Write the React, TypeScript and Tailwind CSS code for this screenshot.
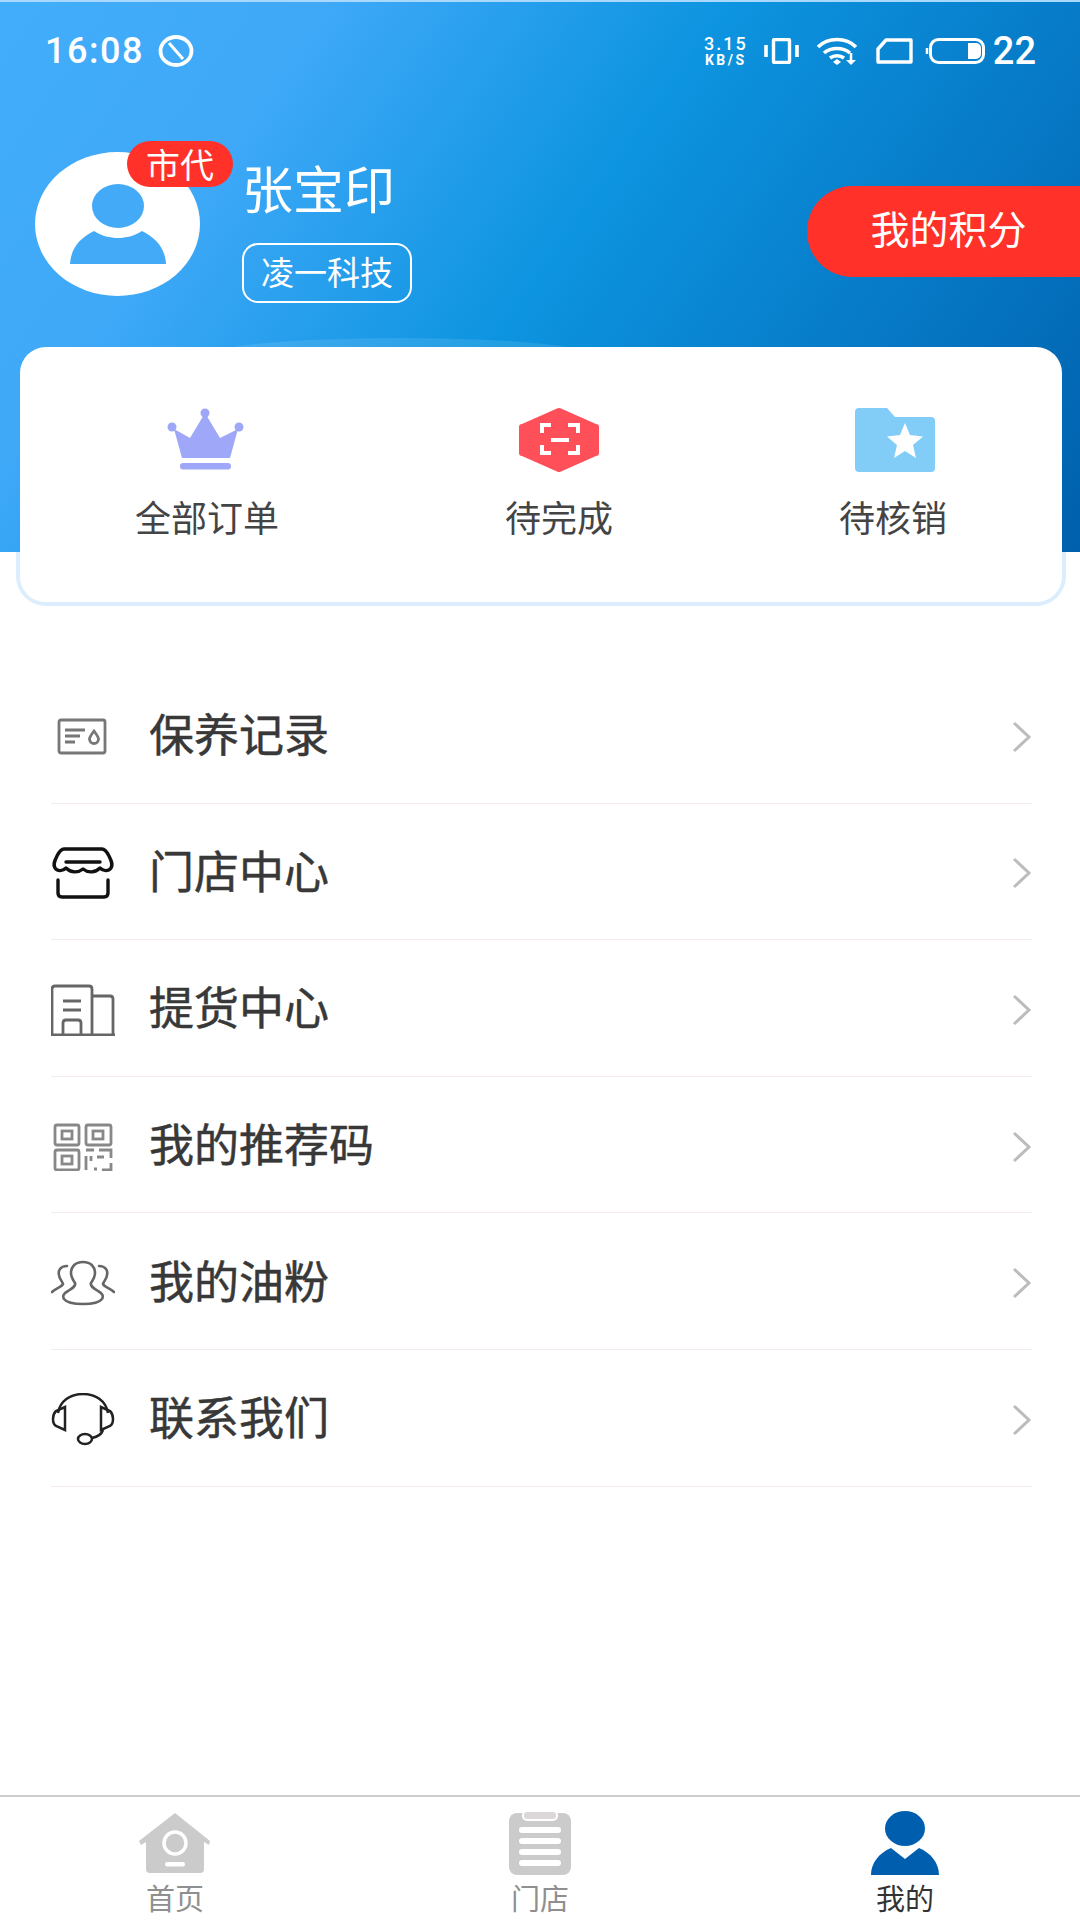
import React from "react";

const Chevron = () => (
  <svg width="20" height="32" viewBox="0 0 20 32" fill="none" stroke="#bcbcbc" strokeWidth="3"><path d="M2 2l15 14L2 30" /></svg>
);

const NoDisturb = () => (
  <svg width="36" height="32" viewBox="0 0 36 32" fill="none" stroke="white" strokeWidth="3.800"><ellipse cx="18" cy="16" rx="15.500" ry="14" /><path d="M11 8l14 16" strokeWidth="3" /></svg>
);

const Vibrate = () => (
  <svg width="35" height="26" viewBox="0 0 35 26" fill="none" stroke="white"><rect x="9.500" y="1.500" width="16" height="23" strokeWidth="3.400" rx="1" /><path d="M2 7v12M33 7v12" strokeWidth="3.600" /></svg>
);

const Wifi = () => (
  <svg width="42" height="29" viewBox="0 0 42 29" fill="none" stroke="white" strokeWidth="3.600">
    <path d="M2 10C12 0 30 0 40 10" /><path d="M8 16c7-6 19-6 26 0" /><path d="M14 21c4-3 10-3 14 0" />
    <path d="M17 25l4-3 4 3-4 3z" fill="white" stroke="none" /><path d="M35 16v9" strokeWidth="2.500" /><path d="M30 23h10l-5 5z" fill="white" stroke="none" />
  </svg>
);

const Sim = () => (
  <svg width="37" height="26" viewBox="0 0 37 26" fill="none" stroke="white" strokeWidth="3.400"><path d="M10 2h25v22H2V11z" strokeLinejoin="round" /></svg>
);

const Battery = () => (
  <svg width="60" height="26" viewBox="0 0 60 26" fill="none">
    <path d="M2 10v6" stroke="white" strokeWidth="2.500" />
    <rect x="5.500" y="1.500" width="53" height="23" rx="8" stroke="white" strokeWidth="3" />
    <path d="M43 5h8a5 5 0 0 1 5 5v6a5 5 0 0 1-5 5h-8z" fill="white" />
  </svg>
);

const Person = () => (
  <svg width="96" height="80" viewBox="0 0 96 80" fill="#43aaf7">
    <ellipse cx="48" cy="22" rx="26" ry="22" />
    <path d="M0 80C1 64 10 54 24 47c8 5 16 7 24 7s16-2 24-7c14 7 23 17 24 33z" />
  </svg>
);

const Crown = () => (
  <svg width="80" height="64" viewBox="0 0 80 64" fill="#9fa8f8">
    <circle cx="38" cy="5" r="4.500" /><circle cx="5" cy="19" r="4.500" /><circle cx="72" cy="19" r="4.500" />
    <path d="M38 5L53 30l18-9-8 29H15L7 21l16 9z" />
    <rect x="13" y="55" width="51" height="6.500" rx="3" />
  </svg>
);

const Hex = () => (
  <svg width="80" height="64" viewBox="0 0 80 64">
    <path d="M40 0a4 4 0 0 1 2 .5L77 16a3 3 0 0 1 3 3v26a3 3 0 0 1-3 3L42 63.500a4 4 0 0 1-4 0L3 48a3 3 0 0 1-3-3V19a3 3 0 0 1 3-3L38 .5A4 4 0 0 1 40 0z" fill="#ff4f58" />
    <path d="M23 25V17h9M49 17h10v8M23 37v8h9M59 37v8H49" fill="none" stroke="white" strokeWidth="4" /><path d="M32 32h18" stroke="white" strokeWidth="4" />
  </svg>
);

const Folder = () => (
  <svg className="ml-[4px]" width="80" height="64" viewBox="0 0 80 64">
    <path d="M0 4a4 4 0 0 1 4-4h28l8 9h36a4 4 0 0 1 4 4v47a4 4 0 0 1-4 4H4a4 4 0 0 1-4-4z" fill="#82ccf8" />
    <path d="M50 15l5 12 13 1.500-10 8.500 3 13-11-7-11 7 3-13-10-8.500 13-1.500z" fill="white" />
  </svg>
);

const Care = () => (
  <svg width="64" height="40" viewBox="0 0 64 40" fill="none" stroke="#777" strokeWidth="2.800">
    <rect x="8" y="3" width="46" height="33" rx="2" />
    <path d="M14 13h20M14 19h15M14 25h10" />
    <path d="M43 14c-3 4-4.500 6-4.500 8a4.500 4.500 0 0 0 9 0c0-2-1.500-4-4.500-8z" />
  </svg>
);

const Store = () => (
  <svg width="64" height="52" viewBox="0 0 64 52" fill="none" stroke="#111" strokeWidth="3.400" strokeLinecap="round" strokeLinejoin="round">
    <path d="M13 2h38c3 0 5 3 7 7 3 6 4 9 2 12-3 4-8 3-11 0-5 5-12 5-17 1-5 4-12 4-17-1-3 3-8 4-11 0-2-3-1-6 2-12 2-4 4-7 7-7z" />
    <path d="M15 15h34" /><path d="M7 33v13c0 3 2 4 4 4h42c2 0 4-1 4-4V33" />
  </svg>
);

const Building = () => (
  <svg width="64" height="52" viewBox="0 0 64 52" fill="none" stroke="#666" strokeWidth="2.800">
    <path d="M1 51V5c0-2 1-3 3-3h34c2 0 3 1 3 3v46" /><path d="M41 12h18c2 0 3 1 3 3v36" /><path d="M0 51h64" />
    <path d="M12 17h18M12 26h18" /><path d="M12 51V39c0-2 1-3 3-3h12c2 0 3 1 3 3v12" />
  </svg>
);

const Qr = () => (
  <svg width="60" height="48" viewBox="0 0 60 48" fill="none" stroke="#888" strokeWidth="2.800">
    <rect x="2" y="2" width="24" height="20" rx="2" /><rect x="9" y="8" width="10" height="8" />
    <rect x="33" y="2" width="25" height="20" rx="2" /><rect x="40" y="8" width="10" height="8" />
    <rect x="2" y="27" width="24" height="20" rx="2" /><rect x="9" y="33" width="10" height="8" />
    <path d="M33 33v14M33 27h8M38 33v5M46 27h12v8M44 34h7M58 40v7h-9M41 46h3" />
  </svg>
);

const Fans = () => (
  <svg width="64" height="46" viewBox="0 0 64 46" fill="none" stroke="#666" strokeWidth="2.600" strokeLinecap="round">
    <path d="M32 2c-8 0-12 5-12 11 0 4 2 7 4 10 1 3-2 5-7 8-4 2-6 5-4 8 3 4 11 5 19 5s16-1 19-5c2-3 0-6-4-8-5-3-8-5-7-8 2-3 4-6 4-10 0-6-4-11-12-11z" />
    <path d="M16 6c-7 0-9 5-8 9 0 3 3 6 4 9-1 3-7 4-11 8" /><path d="M48 6c7 0 9 5 8 9 0 3-3 6-4 9 1 3 7 4 11 8" />
  </svg>
);

const Headset = () => (
  <svg width="64" height="54" viewBox="0 0 64 54" fill="none" stroke="#222" strokeWidth="2.500">
    <path d="M7 20C9 8 19 1 32 1s23 7 25 19" />
    <path d="M14 14v23l-9-4q-3-2-3-7t3-8z" /><path d="M50 14v23l9-4q3-2 3-7t-3-8z" />
    <path d="M52 37q-2 6-11 8" /><ellipse cx="34" cy="46" rx="7" ry="5" />
  </svg>
);

const HomeTab = () => (
  <svg width="72" height="64" viewBox="0 0 72 64">
    <path d="M36 2L71 30l-1 4-5-3v27q0 4-4 4H11q-4 0-4-4V31l-5 3-2-4z" fill="#cbcbcb" />
    <circle cx="36" cy="32" r="11" fill="none" stroke="white" strokeWidth="3.500" />
    <rect x="26" y="51" width="20" height="4.500" rx="2.200" fill="white" />
  </svg>
);

const StoreTab = () => (
  <svg width="62" height="64" viewBox="0 0 62 64">
    <rect x="0" y="2" width="62" height="62" rx="8" fill="#cbcbcb" />
    <rect x="14" y="0" width="34" height="9" rx="4" fill="#dcd8da" stroke="white" strokeWidth="2" />
    <g fill="white"><rect x="10" y="16" width="42" height="6" rx="3" /><rect x="10" y="27" width="42" height="6" rx="3" /><rect x="10" y="38" width="42" height="6" rx="3" /><rect x="10" y="49" width="42" height="6" rx="3" /></g>
  </svg>
);

const MeTab = () => (
  <svg width="68" height="64" viewBox="0 0 68 64" fill="#005eaf">
    <ellipse cx="34" cy="17.500" rx="20" ry="17.500" />
    <path d="M0 64c0-12 8-22 20-27l14 11 14-11c12 5 20 15 20 27z" />
  </svg>
);

const cards = [
  { label: "全部订单", icon: <Crown />, cx: "w-[374px]" },
  { label: "待完成", icon: <Hex />, cx: "w-[330px]" },
  { label: "待核销", icon: <Folder />, cx: "w-[338px]" },
];

const rows = [
  { label: "保养记录", icon: <Care /> },
  { label: "门店中心", icon: <Store /> },
  { label: "提货中心", icon: <Building /> },
  { label: "我的推荐码", icon: <Qr /> },
  { label: "我的油粉", icon: <Fans /> },
  { label: "联系我们", icon: <Headset /> },
];

const tabs = [
  { label: "首页", icon: <HomeTab />, color: "text-[#8f8f8f]", w: "w-[350px]" },
  { label: "门店", icon: <StoreTab />, color: "text-[#8f8f8f]", w: "w-[380px]" },
  { label: "我的", icon: <MeTab />, color: "text-[#333333]", w: "w-[350px]" },
];

export default function App() {
  return (
    <div className="relative z-0 flex h-[1920px] w-[1080px] flex-col overflow-hidden bg-white font-['Roboto','Noto_Sans_CJK_SC',sans-serif]">
      <header className="relative h-[552px] shrink-0 overflow-hidden border-t-2 border-[#a8d8fa] bg-[linear-gradient(125deg,#42adfb_0%,#3fa9f8_22%,#0d94e0_50%,#0060ad_100%)]">
        <div className="absolute left-[200px] right-[480px] top-[336px] h-[40px] rounded-[50%] bg-white/10" />
        <div className="flex h-[98px] items-center pl-[45px] pr-[44px] text-white">
          <span className="text-[36px] font-medium tracking-[1.5px]">16:08</span>
          <span className="ml-[14px] flex"><NoDisturb /></span>
          <div className="ml-auto flex items-center">
            <div className="flex w-[44px] flex-col items-center text-center font-medium">
              <span className="text-[18px] leading-[18px] tracking-[2px]">3.15</span>
              <span className="text-[14px] font-bold leading-[14px] tracking-[2.5px]">KB/S</span>
            </div>
            <span className="ml-[16px] flex"><Vibrate /></span>
            <span className="ml-[17px] flex"><Wifi /></span>
            <span className="ml-[18px] flex"><Sim /></span>
            <span className="ml-[12px] flex"><Battery /></span>
            <span className="ml-[8px] text-[38px] font-medium leading-none">22</span>
          </div>
        </div>
        <div className="mt-[52px] flex items-start pl-[35px]">
          <div className="relative flex h-[144px] w-[165px] items-center justify-center rounded-[50%] bg-white">
            <Person />
            <span className="absolute left-[92px] top-[-11px] flex h-[46px] w-[106px] items-center justify-center rounded-[23px] bg-[#ff3129] pt-[3px] text-[34px] leading-none text-white">市代</span>
          </div>
          <div className="ml-[42px] flex flex-col items-start">
            <span className="mt-[10px] text-[51px] leading-[60px] text-white">张宝印</span>
            <span className="mt-[21px] flex h-[60px] w-[170px] items-center justify-center rounded-[16px] border-[2.5px] border-white text-[33px] leading-none text-white">凌一科技</span>
          </div>
          <span className="ml-auto mt-[34px] flex h-[91px] w-[273px] items-center justify-center rounded-l-[46px] bg-[#ff3129] pl-[10px] text-[39px] leading-none text-white">我的积分</span>
        </div>
      </header>

      <section className="relative ml-[20px] mt-[-205px] flex h-[255px] w-[1042px] shrink-0 rounded-[26px] bg-white">
        <div className="absolute inset-0 -z-10 rounded-[26px] shadow-[0_0_0_4px_#dcedfd]" />
        {cards.map((c) => (
          <div key={c.label} className={`flex flex-col items-center pt-[61px] ${c.cx}`}>
            <span className="flex h-[64px] items-center">{c.icon}</span>
            <span className="mt-[24px] text-[36px] leading-[48px] text-[#444444]">{c.label}</span>
          </div>
        ))}
      </section>

      <nav className="mt-[65px] flex flex-col pl-[51px] pr-[48px]">
        {rows.map((r) => (
          <div key={r.label} className="flex h-[136.6px] items-center border-b border-[#f3e9ee] pt-[4px]">
            <span className="flex w-[64px] justify-center">{r.icon}</span>
            <span className="ml-[34px] text-[45px] leading-none text-[#383838] [-webkit-text-stroke:0.5px_#383838]">{r.label}</span>
            <span className="ml-auto flex"><Chevron /></span>
          </div>
        ))}
      </nav>

      <div className="flex-1" />

      <footer className="flex h-[125px] shrink-0 border-t-2 border-[#cccccc] bg-white">
        {tabs.map((t) => (
          <div key={t.label} className={`flex flex-col items-center pt-[14px] ${t.w}`}>
            <span className="flex h-[64px] items-end">{t.icon}</span>
            <span className={`mt-[7px] text-[29px] leading-[36px] ${t.color}`}>{t.label}</span>
          </div>
        ))}
      </footer>
    </div>
  );
}
